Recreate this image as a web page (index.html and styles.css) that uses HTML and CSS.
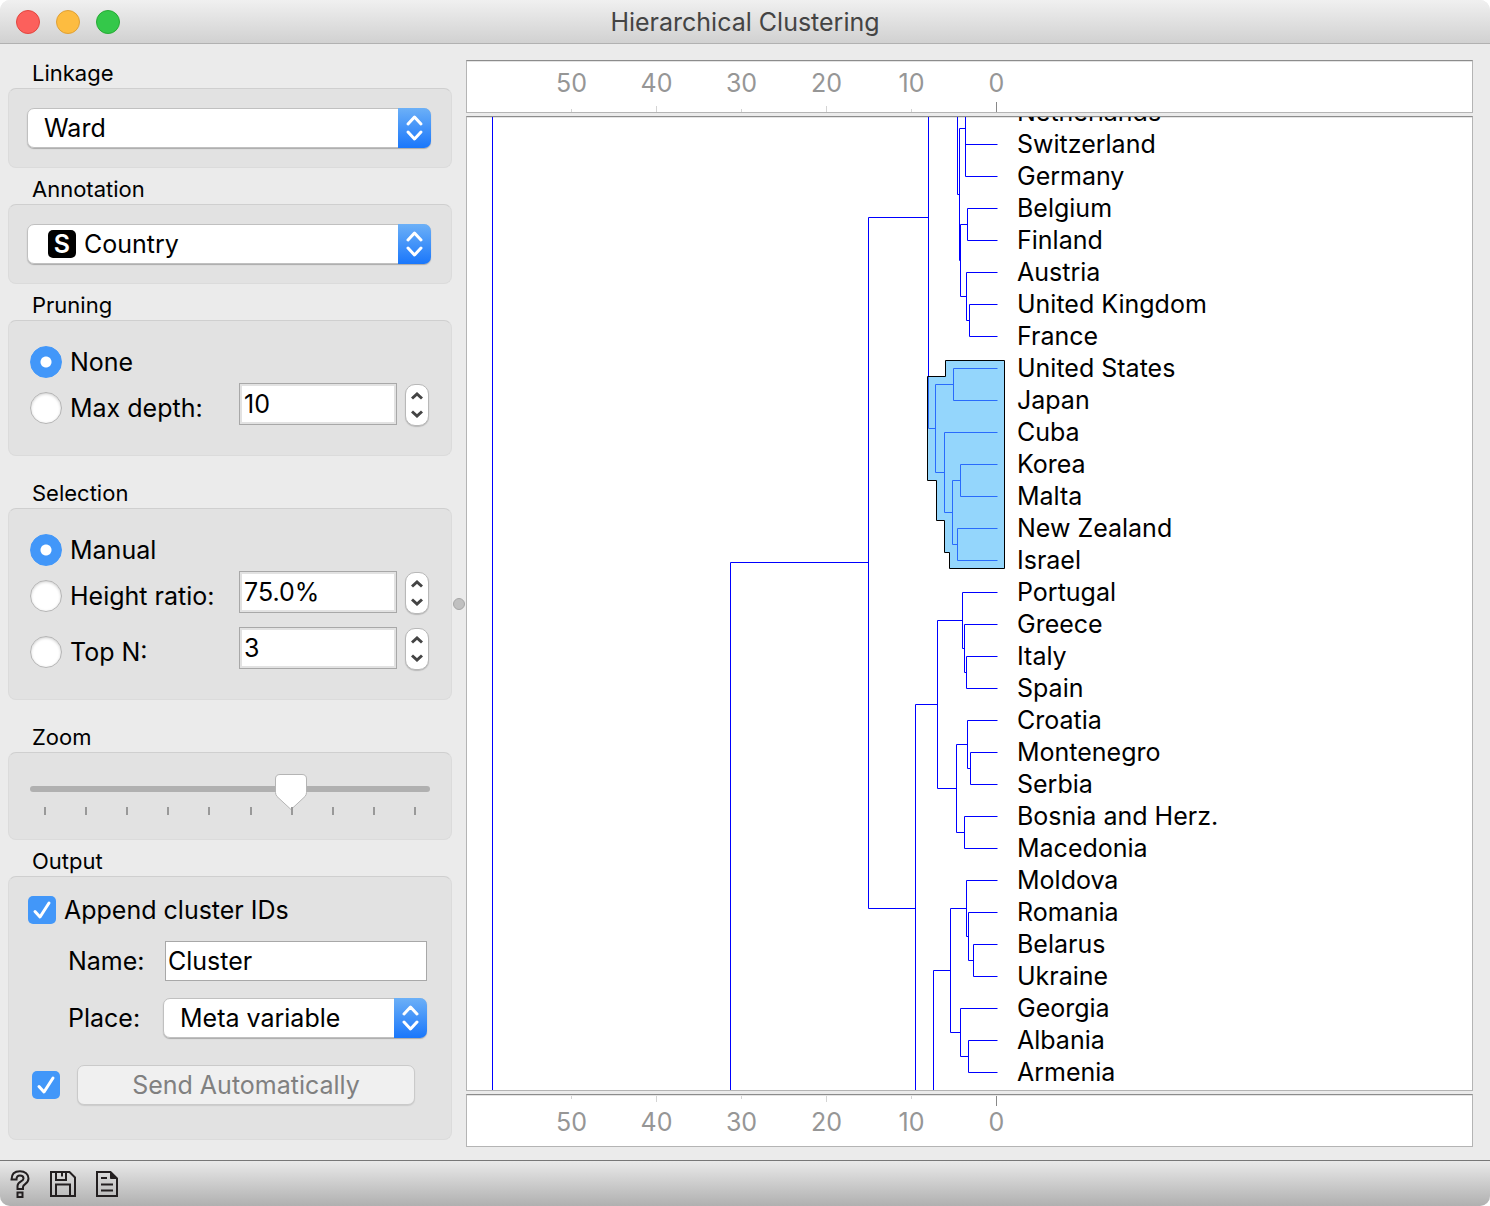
FILE: index.html
```html
<!DOCTYPE html>
<html lang="en">
<head>
<meta charset="utf-8">
<meta name="viewport" content="width=device-width, initial-scale=1">
<title>Hierarchical Clustering</title>
<link rel="stylesheet" href="styles.css">
</head>
<body>
<div class="window">
  <header class="titlebar">
    <div class="traffic">
      <button class="light light-close" type="button" aria-label="Close"></button>
      <button class="light light-minimize" type="button" aria-label="Minimize"></button>
      <button class="light light-zoom" type="button" aria-label="Zoom window"></button>
    </div>
    <h1 class="title">Hierarchical Clustering</h1>
  </header>

  <main class="content">
    <form class="sidebar">
      <section>
        <h2 class="group-title"><label for="linkage">Linkage</label></h2>
        <div class="panel">
          <div class="combo">
            <select id="linkage"><option>Ward</option></select>
            <svg class="combo-arrows" viewBox="0 0 33 40" aria-hidden="true"><path d="M10 16l6.500-7 6.500 7M10 24l6.500 7 6.500-7"/></svg>
          </div>
        </div>
      </section>

      <section>
        <h2 class="group-title"><label for="annotation">Annotation</label></h2>
        <div class="panel">
          <div class="combo combo-with-badge">
            <select id="annotation"><option>Country</option></select>
            <span class="type-badge" aria-hidden="true">S</span>
            <svg class="combo-arrows" viewBox="0 0 33 40" aria-hidden="true"><path d="M10 16l6.500-7 6.500 7M10 24l6.500 7 6.500-7"/></svg>
          </div>
        </div>
      </section>

      <section>
        <h2 class="group-title">Pruning</h2>
        <div class="panel panel-options">
          <label class="option"><input type="radio" name="pruning" checked>None</label>
          <div class="option-row">
            <label class="option"><input type="radio" name="pruning">Max depth:</label>
            <input class="spin-input" type="text" value="10" aria-label="Max depth">
            <div class="stepper">
              <button type="button" aria-label="Increase"><svg viewBox="0 0 12 8"><path d="M1 6.500l5-4.500 5 4.500"/></svg></button>
              <button type="button" aria-label="Decrease"><svg viewBox="0 0 12 8"><path d="M1 1.500l5 4.500 5-4.500"/></svg></button>
            </div>
          </div>
        </div>
      </section>

      <section class="spaced">
        <h2 class="group-title">Selection</h2>
        <div class="panel panel-options">
          <label class="option"><input type="radio" name="selection" checked>Manual</label>
          <div class="option-row">
            <label class="option"><input type="radio" name="selection">Height ratio:</label>
            <input class="spin-input" type="text" value="75.0%" aria-label="Height ratio">
            <div class="stepper">
              <button type="button" aria-label="Increase"><svg viewBox="0 0 12 8"><path d="M1 6.500l5-4.500 5 4.500"/></svg></button>
              <button type="button" aria-label="Decrease"><svg viewBox="0 0 12 8"><path d="M1 1.500l5 4.500 5-4.500"/></svg></button>
            </div>
          </div>
          <div class="option-row option-row-apart">
            <label class="option"><input type="radio" name="selection">Top N:</label>
            <input class="spin-input" type="text" value="3" aria-label="Top N">
            <div class="stepper">
              <button type="button" aria-label="Increase"><svg viewBox="0 0 12 8"><path d="M1 6.500l5-4.500 5 4.500"/></svg></button>
              <button type="button" aria-label="Decrease"><svg viewBox="0 0 12 8"><path d="M1 1.500l5 4.500 5-4.500"/></svg></button>
            </div>
          </div>
        </div>
      </section>

      <section class="spaced">
        <h2 class="group-title"><label for="zoom">Zoom</label></h2>
        <div class="panel panel-zoom">
          <input class="slider" id="zoom" type="range" min="0" max="9" value="6">
          <div class="slider-ticks" aria-hidden="true"><i></i><i></i><i></i><i></i><i></i><i></i><i></i><i></i><i></i><i></i></div>
        </div>
      </section>

      <section>
        <h2 class="group-title">Output</h2>
        <div class="panel panel-output">
          <label class="check"><input type="checkbox" checked>Append cluster IDs</label>
          <div class="field">
            <label for="cluster-name">Name:</label>
            <div class="text-box"><input class="text-input" id="cluster-name" type="text" value="Cluster"></div>
          </div>
          <div class="field">
            <label for="place">Place:</label>
            <div class="combo">
              <select id="place"><option>Meta variable</option></select>
              <svg class="combo-arrows" viewBox="0 0 33 40" aria-hidden="true"><path d="M10 16l6.500-7 6.500 7M10 24l6.500 7 6.500-7"/></svg>
            </div>
          </div>
          <div class="send">
            <input type="checkbox" checked aria-label="Send automatically">
            <button class="send-button" type="button" disabled>Send Automatically</button>
          </div>
        </div>
      </section>
    </form>

    <div class="splitter"><span class="splitter-grip"></span></div>

    <div class="view">
      <div class="frame axis axis-top">
        <div class="axis-step"><span>50</span><i class="tick tick-small"></i></div>
        <div class="axis-step"><span>40</span><i class="tick tick-medium"></i></div>
        <div class="axis-step"><span>30</span><i class="tick tick-small"></i></div>
        <div class="axis-step"><span>20</span><i class="tick tick-medium"></i></div>
        <div class="axis-step"><span>10</span><i class="tick tick-small"></i></div>
        <div class="axis-step"><span>0</span><i class="tick tick-zero"></i></div>
      </div>

      <div class="frame chart">
        <svg class="dendrogram" viewBox="467 96 540 994" role="img" aria-label="Dendrogram">
          <g class="branches" transform="translate(.5 .5)">
            <path d="M492 96V1090M730 1090V562H868M928 217H868V908H915"/>
            <path d="M928 96V428H935M957 96V194H959M965 96V176H997M965 144H997M965 128H959V260H960M967 224H960V296H966M997 208H967V240H997M997 272H966V320H969M997 304H969V336H997"/>
            <path d="M953 384H935V472H944M997 368H953V400H997M997 432H944V512H952M960 480H952V544H957M997 464H960V496H997M997 528H957V560H997"/>
            <path d="M915 1090V704H937M962 620H937V788H956M997 592H962V648H964M997 624H964V672H966M997 656H966V688H997M967 744H956V832H964M997 720H967V768H970M997 752H970V784H997M997 816H964V848H997"/>
            <path d="M933 1090V970H950M966 908H950V1032H960M997 880H966V936H968M997 912H968V960H973M997 944H973V976H997M997 1008H960V1056H968M997 1040H968V1072H997"/>
          </g>
          <path class="cluster" transform="translate(.5 .5)" d="M945 360H1004V568H949V552H944V520H936V480H927V376H945Z"/>
        </svg>
        <ul class="labels">
          <li>Netherlands</li>
          <li>Switzerland</li>
          <li>Germany</li>
          <li>Belgium</li>
          <li>Finland</li>
          <li>Austria</li>
          <li>United Kingdom</li>
          <li>France</li>
          <li>United States</li>
          <li>Japan</li>
          <li>Cuba</li>
          <li>Korea</li>
          <li>Malta</li>
          <li>New Zealand</li>
          <li>Israel</li>
          <li>Portugal</li>
          <li>Greece</li>
          <li>Italy</li>
          <li>Spain</li>
          <li>Croatia</li>
          <li>Montenegro</li>
          <li>Serbia</li>
          <li>Bosnia and Herz.</li>
          <li>Macedonia</li>
          <li>Moldova</li>
          <li>Romania</li>
          <li>Belarus</li>
          <li>Ukraine</li>
          <li>Georgia</li>
          <li>Albania</li>
          <li>Armenia</li>
        </ul>
      </div>

      <div class="frame axis axis-bottom">
        <div class="axis-step"><i class="tick tick-small"></i><span>50</span></div>
        <div class="axis-step"><i class="tick tick-medium"></i><span>40</span></div>
        <div class="axis-step"><i class="tick tick-small"></i><span>30</span></div>
        <div class="axis-step"><i class="tick tick-medium"></i><span>20</span></div>
        <div class="axis-step"><i class="tick tick-small"></i><span>10</span></div>
        <div class="axis-step"><i class="tick tick-zero"></i><span>0</span></div>
      </div>
    </div>
  </main>

  <footer class="statusbar">
    <button type="button" aria-label="Help">
      <svg width="20" height="28" viewBox="0 0 20 28" fill="none">
        <path d="M1.500 9.500C1.500 4 5 1.200 10 1.200s8.500 3 8.500 7.300c0 5.500-5.500 5.500-5.500 8.500v2H7.500v-3c0-4.500 6-4.500 6-7.500C13.500 6.500 12 5.500 10 5.500S6.500 6.500 6.500 9.500Z" stroke="#231f20" stroke-width="2"/>
        <path d="M7.500 22.500h5v4.500h-5z" stroke="#231f20" stroke-width="2"/>
      </svg>
    </button>
    <button type="button" aria-label="Save image">
      <svg width="26" height="26" viewBox="0 0 26 26" fill="none" stroke="#231f20" stroke-width="2">
        <path d="M1 1h18.500L25 6.500V25H1z"/>
        <path d="M6 1v8h10V1M12 1.500v4"/>
        <path d="M6 25V13.500h14V25"/>
      </svg>
    </button>
    <button type="button" aria-label="Report">
      <svg width="22" height="26" viewBox="0 0 22 26" fill="none" stroke="#231f20" stroke-width="2">
        <path d="M1 1h13.500L21 7.500V25H1z"/>
        <path d="M14.500 1v6.500H21z" fill="#231f20" stroke-width="1"/>
        <path d="M5 7h6M5 13.500h12M5 19.500h12"/>
      </svg>
    </button>
  </footer>
</div>
</body>
</html>
```

FILE: styles.css
```css
* {
  box-sizing: border-box;
}

body {
  margin: 0;
  background: #fff;
  color: #000;
  font-family: Inter, "Liberation Sans", sans-serif;
  font-size: 25px;
  line-height: 32px;
}

button,
input,
select {
  margin: 0;
  padding: 0;
  border: 0;
  color: inherit;
  font: inherit;
}

.window {
  display: flex;
  flex-direction: column;
  height: 100vh;
  overflow: hidden;
  border-radius: 10px;
  background: #ebebeb;
}

/* Title bar */

.titlebar {
  display: grid;
  grid-template-columns: 1fr auto 1fr;
  align-items: center;
  height: 44px;
  padding: 0 16px;
  border-bottom: 1px solid #b1b1b1;
  background: linear-gradient(#f0f0f0, #d1d1d1);
}

.traffic {
  display: flex;
  gap: 16px;
}

.light {
  width: 24px;
  height: 24px;
  border: 1px solid;
  border-radius: 50%;
}

.light-close {
  border-color: #e2463f;
  background: #fc605c;
}

.light-minimize {
  border-color: #dfa035;
  background: #fdbc40;
}

.light-zoom {
  border-color: #27aa35;
  background: #34c84a;
}

.title {
  margin: 0;
  color: #444;
  font-size: 25px;
  font-weight: 400;
}

/* Main area */

.content {
  display: grid;
  flex: 1;
  grid-template-columns: 444px 14px 1fr;
  grid-template-rows: minmax(0, 1fr);
  min-height: 0;
  padding: 0 17px 0 8px;
}

.sidebar {
  display: flex;
  flex-direction: column;
  gap: 6px;
  padding-top: 14px;
}

.spaced {
  margin-top: 16px;
}

.group-title {
  margin: 0;
  padding-left: 24px;
  font-size: 22px;
  font-weight: 400;
  line-height: 30px;
}

.panel {
  padding: 19px 20px 19px 18px;
  border: 1px solid #dbdbdb;
  border-top-color: #cfcfcf;
  border-radius: 8px;
  background: #e2e2e2;
}

/* Drop-downs */

.combo {
  display: grid;
  align-items: center;
  border-radius: 7px;
  box-shadow: 0 1px 1px #aaa;
}

.combo > * {
  grid-area: 1 / 1;
}

.combo select {
  width: 100%;
  height: 40px;
  padding: 0 40px 0 16px;
  border: 1px solid #c0c0c0;
  border-radius: 7px;
  background: #fff;
  appearance: none;
}

.combo-with-badge select {
  padding-left: 56px;
}

.combo-arrows {
  justify-self: end;
  width: 33px;
  height: 40px;
  border-radius: 0 7px 7px 0;
  background: linear-gradient(#6cb0f7, #1a77fb);
  fill: none;
  stroke: #fff;
  stroke-width: 3;
  stroke-linecap: round;
  stroke-linejoin: round;
  pointer-events: none;
}

.type-badge {
  width: 28px;
  height: 28px;
  margin-left: 21px;
  border-radius: 5px;
  background: #000;
  color: #fff;
  font-size: 25px;
  font-weight: 600;
  line-height: 28px;
  text-align: center;
  pointer-events: none;
}

/* Radio groups with spin boxes */

.panel-options {
  display: flex;
  flex-direction: column;
  gap: 5px;
  padding: 25px 22px 29px 21px;
}

.option {
  display: flex;
  align-items: center;
  gap: 8px;
}

.option input {
  width: 32px;
  height: 32px;
  border: 1px solid #b4b4b4;
  border-radius: 50%;
  background: #fff;
  box-shadow: inset 0 1px 3px #ccc;
  appearance: none;
}

.option input:checked {
  border-color: #4297f9;
  background: radial-gradient(circle, #fff 5px, #4297f9 6px);
  box-shadow: none;
}

.option-row {
  display: grid;
  grid-template-columns: 1fr 158px 24px;
  align-items: end;
  gap: 8px;
  height: 43px;
}

.option-row .option {
  height: 36px;
}

.option-row-apart {
  margin-top: 8px;
}

.spin-input {
  align-self: start;
  width: 100%;
  height: 42px;
  padding: 0 4px;
  border: 1px solid #a8a8a8;
  background: #fff;
  box-shadow: inset 0 0 0 2px #e2e2e2;
}

.stepper {
  display: grid;
  height: 42px;
  padding: 2px 0;
  overflow: hidden;
  border: 1px solid #b8b8b8;
  border-radius: 10px;
  background: #fff;
  box-shadow: 0 1px 1px #bbb;
}

.stepper button {
  display: grid;
  place-items: center;
  background: none;
}

.stepper svg {
  width: 12px;
  height: 8px;
  fill: none;
  stroke: #444;
  stroke-width: 3;
}

/* Zoom slider */

.panel-zoom {
  padding: 21px 21px 24px;
}

.slider {
  display: block;
  width: 100%;
  height: 30px;
  background: none;
  appearance: none;
}

.slider::-webkit-slider-runnable-track {
  height: 6px;
  border-radius: 3px;
  background: #b0b0b0;
}

.slider::-webkit-slider-thumb {
  width: 32px;
  height: 36px;
  margin-top: -12px;
  background: url("data:image/svg+xml,%3Csvg xmlns='http://www.w3.org/2000/svg' width='32' height='36'%3E%3Cpath d='M5 .5h22q4.500 0 4.500 4.500v13.500q0 2-1.500 4L16 35.500 2 22.500Q.5 20.500 .5 18.500V5Q.5 .5 5 .5z' fill='%23fff' stroke='%23b4b4b4'/%3E%3C/svg%3E");
  appearance: none;
}

.slider-ticks {
  display: flex;
  justify-content: space-between;
  margin: 3px 14px 0;
}

.slider-ticks i {
  width: 2px;
  height: 8px;
  background: #999;
}

/* Output */

.panel-output {
  padding: 19px 24px 34px 19px;
}

input[type="checkbox"] {
  width: 28px;
  height: 28px;
  border-radius: 5px;
  background: #4297f9 url("data:image/svg+xml,%3Csvg xmlns='http://www.w3.org/2000/svg' width='28' height='28'%3E%3Cpath d='M7 15.500l5 5.500 9-14' fill='none' stroke='%23fff' stroke-width='3' stroke-linecap='round' stroke-linejoin='round'/%3E%3C/svg%3E");
  appearance: none;
}

.check {
  display: flex;
  align-items: center;
  gap: 8px;
  height: 28px;
}

.field {
  display: grid;
  grid-template-columns: 95px 1fr;
  align-items: center;
  margin-top: 17px;
  padding-left: 40px;
}

.text-box {
  display: flex;
  padding-left: 2px;
}

.text-input {
  width: 100%;
  height: 40px;
  padding: 0 2px;
  border: 1px solid #a8a8a8;
  background: #fff;
}

.send {
  display: grid;
  grid-template-columns: 28px 1fr;
  align-items: center;
  gap: 17px;
  margin: 27px 12px 0 4px;
}

.send-button {
  height: 40px;
  border: 1px solid #cacaca;
  border-radius: 7px;
  background: #f0f0f0;
  box-shadow: 0 1px 1px #ccc;
  color: #808080;
}

/* Splitter */

.splitter {
  display: grid;
  place-items: center;
  padding-top: 4px;
}

.splitter-grip {
  width: 12px;
  height: 12px;
  border: 1px solid #a6a6a6;
  border-radius: 50%;
  background: #c0c0c0;
}

/* Dendrogram view */

.view {
  display: flex;
  flex-direction: column;
  gap: 3px;
  min-width: 0;
  padding: 16px 0 13px;
}

.frame {
  border: 1px solid #b4b4b4;
  border-top-color: #8c8c8c;
  background: #fff;
  box-shadow: inset 0 1px #e4e4e4;
}

.axis {
  display: flex;
  flex: none;
  height: 53px;
  padding-left: 62px;
  color: #969696;
}

.axis-step {
  display: flex;
  flex-direction: column;
  align-items: center;
  justify-content: space-between;
  width: 85px;
}

.axis-top {
  padding-top: 6px;
}

.axis-bottom {
  padding-top: 1px;
  padding-bottom: 8px;
}

.tick {
  width: 1px;
  background: #d4d4d4;
}

.tick-small {
  height: 3px;
}

.tick-medium {
  height: 6px;
}

.tick-zero {
  height: 10px;
  background: #888;
}

.chart {
  display: flex;
  flex: 1;
  align-items: flex-end;
  gap: 10px;
  min-height: 0;
  overflow: hidden;
}

.dendrogram {
  flex: none;
  width: 540px;
  height: 994px;
}

.branches {
  fill: none;
  stroke: #00f;
}

.cluster {
  fill: rgba(70, 185, 250, .58);
  stroke: #000;
}

.labels {
  margin: 0;
  padding: 0 0 2px;
  list-style: none;
}

/* Status bar */

.statusbar {
  display: flex;
  flex: none;
  align-items: center;
  gap: 20px;
  height: 46px;
  padding: 0 10px;
  border-top: 1px solid #777;
  background: linear-gradient(#e9e9e9, #b0b0b0);
}

.statusbar button {
  display: flex;
  background: none;
}
```
